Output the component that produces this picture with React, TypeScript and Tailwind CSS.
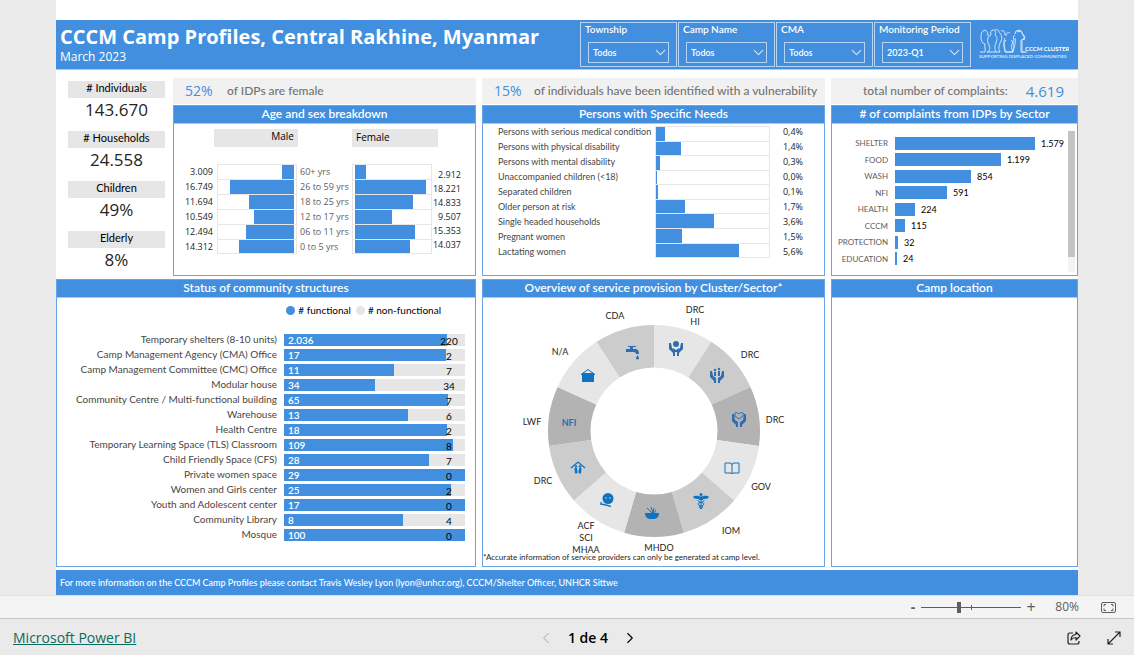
import React, { useState } from 'react';
import { ChevronDown, ChevronLeft, ChevronRight } from 'lucide-react';

const AGE_GROUPS = [
  { label: '60+ yrs', male: '3.009', maleWidth: 12, female: '2.912', femaleWidth: 11 },
  { label: '26 to 59 yrs', male: '16.749', maleWidth: 64, female: '18.221', femaleWidth: 71 },
  { label: '18 to 25 yrs', male: '11.694', maleWidth: 45, female: '14.833', femaleWidth: 58 },
  { label: '12 to 17 yrs', male: '10.549', maleWidth: 40, female: '9.507', femaleWidth: 37 },
  { label: '06 to 11 yrs', male: '12.494', maleWidth: 48, female: '15.353', femaleWidth: 60 },
  { label: '0 to 5 yrs', male: '14.312', maleWidth: 55, female: '14.037', femaleWidth: 55 },
];

const NEEDS = [
  { label: 'Persons with serious medical condition', value: '0,4%', width: 9 },
  { label: 'Persons with physical disability', value: '1,4%', width: 25 },
  { label: 'Persons with mental disability', value: '0,3%', width: 4 },
  { label: 'Unaccompanied children (<18)', value: '0,0%', width: 1 },
  { label: 'Separated children', value: '0,1%', width: 2 },
  { label: 'Older person at risk', value: '1,7%', width: 29 },
  { label: 'Single headed households', value: '3,6%', width: 58 },
  { label: 'Pregnant women', value: '1,5%', width: 26 },
  { label: 'Lactating women', value: '5,6%', width: 83 },
];

const COMPLAINTS = [
  { label: 'SHELTER', value: 1579 },
  { label: 'FOOD', value: 1199 },
  { label: 'WASH', value: 854 },
  { label: 'NFI', value: 591 },
  { label: 'HEALTH', value: 224 },
  { label: 'CCCM', value: 115 },
  { label: 'PROTECTION', value: 32 },
  { label: 'EDUCATION', value: 24 },
];

const STRUCTURES = [
  { label: 'Temporary shelters (8-10 units)', ok: '2.036', broken: '220', share: 90 },
  { label: 'Camp Management Agency (CMA) Office', ok: '17', broken: '2', share: 89.5 },
  { label: 'Camp Management Committee (CMC) Office', ok: '11', broken: '7', share: 61 },
  { label: 'Modular house', ok: '34', broken: '34', share: 50 },
  { label: 'Community Centre / Multi-functional building', ok: '65', broken: '7', share: 90.5 },
  { label: 'Warehouse', ok: '13', broken: '6', share: 68.5 },
  { label: 'Health Centre', ok: '18', broken: '2', share: 90 },
  { label: 'Temporary Learning Space (TLS) Classroom', ok: '109', broken: '8', share: 93.5 },
  { label: 'Child Friendly Space (CFS)', ok: '28', broken: '7', share: 80 },
  { label: 'Private women space', ok: '29', broken: '0', share: 100 },
  { label: 'Women and Girls center', ok: '25', broken: '2', share: 92.5 },
  { label: 'Youth and Adolescent center', ok: '17', broken: '0', share: 100 },
  { label: 'Community Library', ok: '8', broken: '4', share: 66 },
  { label: 'Mosque', ok: '100', broken: '0', share: 100 },
];

const KPIS = [
  { label: '# Individuals', value: '143.670' },
  { label: '# Households', value: '24.558' },
  { label: 'Children', value: '49%' },
  { label: 'Elderly', value: '8%' },
];

const SLICERS = [
  { id: 'township', label: 'Township', value: 'Todos' },
  { id: 'camp', label: 'Camp Name', value: 'Todos' },
  { id: 'cma', label: 'CMA', value: 'Todos' },
  { id: 'period', label: 'Monitoring Period', value: '2023-Q1' },
];

const SHADES = ['#e6e6e6', '#cccccc', '#b3b3b3'];
// Shade of each ring slice, clockwise from the top
const SLICES = [0, 1, 2, 0, 1, 2, 0, 1, 2, 0, 1];

const PROVIDERS: Array<{ x: number; y: number; lines: string[] }> = [
  { x: 41, y: -118, lines: ['DRC', 'HI'] },
  { x: 96, y: -73, lines: ['DRC'] },
  { x: 121, y: -8, lines: ['DRC'] },
  { x: 107, y: 59, lines: ['GOV'] },
  { x: 77, y: 103, lines: ['IOM'] },
  { x: 5, y: 120, lines: ['MHDO'] },
  { x: -68, y: 98, lines: ['ACF', 'SCI', 'MHAA'] },
  { x: -111, y: 53, lines: ['DRC'] },
  { x: -122, y: -6, lines: ['LWF'] },
  { x: -94, y: -76, lines: ['N/A'] },
  { x: -39, y: -112, lines: ['CDA'] },
];

function slicePath(index: number) {
  const step = (2 * Math.PI) / SLICES.length;
  const point = (r: number, i: number) => `${r * Math.sin(i * step)} ${-r * Math.cos(i * step)}`;
  return `M${point(106, index)} A106 106 0 0 1 ${point(106, index + 1)} L${point(63.5, index + 1)} A63.5 63.5 0 0 0 ${point(63.5, index)} Z`;
}

const Panel: React.FC<{ title: string; className?: string; children?: React.ReactNode }> = ({
  title,
  className = '',
  children,
}) => (
  <section className={`flex flex-col border border-[#69a5e6] bg-white ${className}`}>
    <h2 className="h-[18px] shrink-0 border-b border-[#a9ccf2] bg-[#418fde] text-center text-xs leading-4 font-semibold text-white">
      {title}
    </h2>
    {children}
  </section>
);

const Slicer: React.FC<{ id: string; label: string; value: string }> = ({ id, label, value }) => (
  <div className="h-[45px] w-[97px] border border-[#b5d5f6] px-[7px]">
    <label htmlFor={id} className="-ml-[3px] block text-[10px] leading-3 font-semibold whitespace-nowrap text-white">
      {label}
    </label>
    <div className="relative mt-[7px]">
      <select
        id={id}
        defaultValue={value}
        className="block h-[21px] w-full appearance-none border border-[#b5d5f6] bg-[#418fde] pl-1 text-[9px] font-semibold text-white"
      >
        <option>{value}</option>
      </select>
      <ChevronDown size={17} strokeWidth={1.5} className="pointer-events-none absolute top-[2px] right-0 text-[#d5e6f9]" />
    </div>
  </div>
);

const ClusterLogo = () => (
  <svg width="90" height="34" viewBox="0 0 90 34" fill="none" stroke="#d5e6f9" strokeWidth="1" aria-label="CCCM Cluster">
    <path d="M1 24h5c1-3-1-5 0-8-3-1-4-3-4-7 0-4 1-6 4-7 2 1 3 3 3 6M8 24c4-1 3-5 1-9-1-4 0-7 3-8-1-3 0-5 2-5 3 0 3 3 2 5 3 2 2 5 1 8-2 4-1 7 0 9H8zM16 2c2-1 4 0 4 2 2 2 4 5 2 9-2 4-3 8-1 11h-4M22 3c3-1 4 1 4 4M26 10c-2 4-1 8 0 14h8M34 24c-2-4-2-8 1-12-1-2-1-4 1-5M27 8c0-3 2-4 4-3M33 24c2-5 4-8 3-14M38 4l4-1 4 8-4 1v12h4" />
    <path d="M27 12c-3 3-2 8 0 12h7c2-5 1-10-2-12M36 6l1-3 4-1 5 7-3 3v12h5" />
    <text x="46" y="23" className="fill-white stroke-none text-[6px] font-bold">CCCM CLUSTER</text>
    <text x="0" y="30" fontSize="4.5" fontWeight="700" className="fill-[#d5e6f9] stroke-none">SUPPORTING DISPLACED COMMUNITIES</text>
  </svg>
);

const ServiceIcons = () => (
  <g fill="#2e6db0">
    {/* protection: figure between two hands */}
    <g transform="translate(14 -91)">
      <circle cx="8" cy="4" r="3" />
      <path d="M1 3v6l4 4v3h2v-5L4 8 3 3zM15 3v6l-4 4v3H9v-5l3-3 1-5z" />
      <path d="M5 8l3 2 3-2v1l-2 3H7L5 9z" />
    </g>
    {/* child protection */}
    <g transform="translate(55 -64)">
      <path d="M1 4v6l4 4v2h2v-5L4 9 3 4zM15 4v6l-4 4v2H9v-5l3-2 1-5z" />
      <circle cx="6" cy="3" r="1.2" />
      <circle cx="10" cy="2" r="1.2" />
      <path d="M5 5h2v4H5zM9 4h2v5H9z" />
    </g>
    {/* gender-based violence */}
    <g transform="translate(77 -20)">
      <path d="M1 3v7l4 4v2h2v-5L4 9 3 3zM15 3v7l-4 4v2H9v-5l3-2 1-6z" />
      <path d="M4 2c2-1 3 0 4 1 1-1 2-2 4-1v3L8 8 4 5z" fill="none" stroke="#2e6db0" />
    </g>
    {/* education: open book */}
    <path d="M71 32h5q2 0 2 2 0-2 2-2h5v10h-5q-2 0-2 1 0-1-2-1h-5zM78 34v9" fill="#e6e6e6" stroke="#0f73c0" strokeWidth="1" />
    {/* health: caduceus */}
    <g transform="translate(39 62)" fill="#0f73c0">
      <circle cx="8" cy="1.500" r="1.500" />
      <path d="M0 4c3-2 5-1 8 0 3-1 5-2 8 0-1 2-4 2-6 2v1H6V6C4 6 1 6 0 4zM7.500 3h1v13h-1z" />
      <path d="M5 7c0 3 6 2 6 4s-5 2-5 3 3 1 3 2M11 7c0 3-6 2-6 4s5 2 5 3-3 1-3 2" fill="none" stroke="#0f73c0" />
    </g>
    {/* food: bowl */}
    <g transform="translate(-10 75)" fill="#0f73c0">
      <path d="M1 7h14c0 4-2 5-4 6H5C3 12 1 11 1 7z" />
      <path d="M3 2l5 5M7 1l2 6M10 2l-1 5M12 4l-2 3" stroke="#0f73c0" />
    </g>
    {/* nutrition */}
    <g transform="translate(-55 62)" fill="#0f73c0">
      <circle cx="9" cy="5.500" r="5.500" />
      <path d="M2 11l5 1c2 0 3 2 5 1M2 9v3" fill="none" stroke="#0f73c0" strokeWidth="1.300" />
      <circle cx="7" cy="5" r=".7" fill="#e6e6e6" />
      <circle cx="11" cy="5" r=".7" fill="#e6e6e6" />
    </g>
    {/* camp coordination: people under a roof */}
    <g transform="translate(-83 30)" fill="#0f73c0">
      <path d="M0 7l7-6 7 6" fill="none" stroke="#0f73c0" strokeWidth="1.300" />
      <circle cx="5" cy="5.500" r="1.200" />
      <circle cx="9" cy="5.500" r="1.200" />
      <path d="M3.500 7h2.500v5.500H4zM8 7h2.500l-.5 5.500H8zM6.600 9h.8v3h-.8z" />
    </g>
    <text x="-85" y="-5" textAnchor="middle" className="text-[9px] font-bold">NFI</text>
    {/* shelter */}
    <g transform="translate(-73 -62)" fill="#0f73c0">
      <path d="M0 5l7-5 7 5v1h-1v7H1V6H0zM3 4h8L7 1z" fillRule="evenodd" />
    </g>
    {/* water: tap */}
    <g transform="translate(-29 -86)">
      <path d="M3 1h8v1H8v2h2c3 0 4 2 4 5h-3c0-1-1-2-2-2H1V4h4V2H3z" />
      <path d="M12.500 10c1 2 1.500 2 1.500 3a1.500 1.500 0 0 1-3 0c0-1 .5-1 1.500-3z" />
    </g>
  </g>
);

const ServiceRing = () => (
  <svg viewBox="-171 -133 342 268" className="mx-auto h-[268px] w-[342px] overflow-visible" role="img" aria-label="Service providers by sector">
    {SLICES.map((shade, index) => (
      <path key={index} d={slicePath(index)} fill={SHADES[shade]} />
    ))}
    <ServiceIcons />
    {PROVIDERS.map((p) => (
      <text key={`${p.x}-${p.y}`} y={p.y} textAnchor="middle" className="fill-[#252423] text-[9px]">
        {p.lines.map((line, i) => (
          <tspan key={line} x={p.x} dy={i ? 12 : 0}>{line}</tspan>
        ))}
      </text>
    ))}
  </svg>
);

const AgeChart = () => (
  <div className="grid flex-1 grid-cols-[39px_84px_55px_80px_1fr] content-start gap-y-[17px] pt-[5px] font-['Open_Sans','Noto_Sans',sans-serif] text-[9px]">
    <div className="col-span-2 ml-10 h-[18px] w-[84px] bg-[#e6e6e6] pr-1 text-right text-[10px] leading-[15px] text-black">Male</div>
    <div />
    <div className="col-span-2 h-[18px] w-[86px] bg-[#e6e6e6] pl-1 text-[10px] leading-4 text-black">Female</div>
    <ul className="text-right leading-[15px]">
      {AGE_GROUPS.map((g) => <li key={g.label}>{g.male}</li>)}
    </ul>
    <ul className="ml-1">
      {AGE_GROUPS.map((g) => (
        <li key={g.label} className="flex h-[15px] justify-end border border-b-0 border-[#e6e6e6] pr-[2px] last:border-b">
          <div className="bg-[#418fde]" style={{ width: g.maleWidth }} />
        </li>
      ))}
    </ul>
    <ul className="pl-[3px] leading-[15px] whitespace-nowrap text-[#605e5c]">
      {AGE_GROUPS.map((g) => <li key={g.label}>{g.label}</li>)}
    </ul>
    <ul>
      {AGE_GROUPS.map((g) => (
        <li key={g.label} className="flex h-[15px] border border-b-0 border-[#e6e6e6] pl-[2px] last:border-b">
          <div className="bg-[#418fde]" style={{ width: g.femaleWidth }} />
        </li>
      ))}
    </ul>
    <ul className="w-[29px] pt-1 text-right leading-[14px]">
      {AGE_GROUPS.map((g) => <li key={g.label}>{g.female}</li>)}
    </ul>
  </div>
);

const NeedsChart = () => (
  <div className="flex items-start pl-[15px] text-[9px] leading-[15px]">
    <ul className="w-[157px] whitespace-nowrap text-[#484644]">
      {NEEDS.map((n) => <li key={n.label}>{n.label}</li>)}
    </ul>
    <ul className="mt-[2px] flex h-[132px] w-[115px] flex-col">
      {NEEDS.map((n) => (
        <li key={n.label} className="flex flex-1 border border-b-0 border-[#e6e6e6] last:border-b">
          <div className="bg-[#418fde]" style={{ width: n.width }} />
        </li>
      ))}
    </ul>
    <ul className="w-[33px] text-right font-['Open_Sans','Noto_Sans',sans-serif]">
      {NEEDS.map((n) => <li key={n.label}>{n.value}</li>)}
    </ul>
  </div>
);

const ComplaintsChart = () => (
  <div className="flex flex-1 justify-between pt-[7px] pr-[2px] pb-[3px]">
    <ul className="mt-1 flex h-[132px] flex-1 flex-col text-[9px]">
      {COMPLAINTS.map((c) => (
        <li key={c.label} className="flex flex-1 items-center">
          <span className="w-14 text-right text-[8px] text-[#605e5c]">{c.label}</span>
          <div className="mr-[6px] ml-[7px] h-[13px] bg-[#418fde]" style={{ width: Math.round(c.value * 0.0887) }} />
          <span className="text-black">{c.value.toLocaleString('de-DE')}</span>
        </li>
      ))}
    </ul>
    <div className="w-[7px] bg-[#f3f3f3]">
      <div className="h-[126px] bg-[#c3c3c3]" />
    </div>
  </div>
);

const StructuresChart = () => (
  <div className="pt-[5px]">
    <div className="flex items-center justify-end gap-[3px] pr-[34px] text-[10px] leading-[15px] text-black">
      <span className="size-[9px] rounded-full bg-[#418fde]" /># functional
      <span className="ml-[2px] size-[9px] rounded-full bg-[#e6e6e6]" /># non-functional
    </div>
    <ul className="mt-[14px] pr-[10px]">
      {STRUCTURES.map((s) => (
        <li key={s.label} className="flex h-[15px] items-center">
          <span className="w-[220px] text-right text-[10px] leading-[15px] whitespace-nowrap text-[#484644]">{s.label}</span>
          <div className="relative ml-[7px] h-3 flex-1 bg-[#e6e6e6]">
            <div className="h-3 bg-[#418fde]" style={{ width: `${s.share}%` }} />
            <span className="absolute top-0 left-1 text-[10px] leading-3 font-semibold text-white">{s.ok}</span>
            <span className="absolute top-0 right-1 w-6 text-center text-[10px] leading-[14px] text-black">{s.broken}</span>
          </div>
        </li>
      ))}
    </ul>
  </div>
);

export default function App() {
  const [zoom, setZoom] = useState(80);

  return (
    <div className="flex min-h-screen flex-col bg-[#eaeaea] font-[Lato,'Open_Sans',sans-serif] text-[#252423]">
      <main className="mx-14 flex-1 bg-white pt-5">
        <header className="flex h-[50px] justify-between border-b border-[#a9ccf2] bg-[#418fde] pr-[9px] pl-1 text-white">
          <div className="font-['Open_Sans','Noto_Sans',sans-serif]">
            <h1 className="pt-[3px] text-[20px] leading-7 font-bold whitespace-nowrap">CCCM Camp Profiles, Central Rakhine, Myanmar</h1>
            <p className="text-xs leading-3 font-medium">March 2023</p>
          </div>
          <div className="flex gap-px pt-[2px]">
            {SLICERS.map((s) => <Slicer key={s.id} {...s} />)}
            <div className="pt-[6px] pl-[7px]"><ClusterLogo /></div>
          </div>
        </header>

        <div className="grid grid-cols-[minmax(0,420fr)_minmax(0,343fr)_minmax(0,247fr)] gap-x-[6px] pt-2">
          <div className="flex">
            <dl className="flex w-[117px] flex-col pt-[3px] pr-2 pl-3 text-center">
              {KPIS.map((k) => (
                <div key={k.label} className="h-[50px] last:h-10">
                  <dt className="h-[17px] bg-[#e6e6e6] text-[11px] leading-[13px] text-black">{k.label}</dt>
                  <dd className="font-['Open_Sans','Noto_Sans',sans-serif] text-[17px] leading-[23px]">{k.value}</dd>
                </div>
              ))}
            </dl>
            <div className="flex min-w-0 flex-1 flex-col">
              <p className="flex h-[26px] items-center bg-[#f1f1f1] text-xs leading-4 font-medium text-[#737373]">
                <span className="w-[54px] pl-3 font-['Open_Sans','Noto_Sans',sans-serif] text-sm font-normal text-[#418fde]">52%</span>
                of IDPs are female
              </p>
              <Panel title="Age and sex breakdown" className="mt-px h-[171px]">
                <AgeChart />
              </Panel>
            </div>
          </div>
          <div>
            <p className="flex h-[26px] items-center bg-[#f1f1f1] text-xs leading-4 font-medium whitespace-nowrap text-[#737373]">
              <span className="w-[52px] pl-3 font-['Open_Sans','Noto_Sans',sans-serif] text-sm font-normal text-[#418fde]">15%</span>
              of individuals have been identified with a vulnerability
            </p>
            <Panel title="Persons with Specific Needs" className="mt-px h-[171px]">
              <NeedsChart />
            </Panel>
          </div>
          <div>
            <p className="flex h-[26px] items-center justify-end gap-[18px] bg-[#f1f1f1] pr-[14px] text-xs leading-4 font-medium whitespace-nowrap text-[#737373]">
              total number of complaints:
              <span className="font-['Open_Sans','Noto_Sans',sans-serif] text-[15px] font-normal text-[#418fde]">4.619</span>
            </p>
            <Panel title="# of complaints from IDPs by Sector" className="mt-px h-[171px]">
              <ComplaintsChart />
            </Panel>
          </div>
        </div>

        <div className="mt-[3px] grid h-[288px] grid-cols-[minmax(0,420fr)_minmax(0,343fr)_minmax(0,247fr)] gap-x-[6px]">
          <Panel title="Status of community structures">
            <StructuresChart />
          </Panel>
          <Panel title="Overview of service provision by Cluster/Sector*" className="relative">
            <ServiceRing />
            <p className="absolute bottom-[3px] left-0 text-[8px] leading-3 whitespace-nowrap">
              *Accurate information of service providers can only be generated at camp level.
            </p>
          </Panel>
          <Panel title="Camp location" />
        </div>

        <footer className="mt-[3px] flex h-[25px] items-center bg-[#418fde] pl-1 text-[9px] font-medium text-white">
          For more information on the CCCM Camp Profiles please contact Travis Wesley Lyon (lyon@unhcr.org), CCCM/Shelter Officer, UNHCR Sittwe
        </footer>
      </main>

      <div className="flex h-6 items-center justify-end border-t border-b border-t-[#e0e0e0] border-b-[#c8c8c8] bg-[#f4f4f4] pr-[18px] font-['Open_Sans','Noto_Sans',sans-serif] text-[#605e5c]">
        <button type="button" aria-label="Zoom out" className="w-3 text-center text-sm leading-4 font-bold" onClick={() => setZoom(Math.max(10, zoom - 10))}>-</button>
        <div className="relative mx-[2px] flex h-3 w-[100px] items-center">
          <div className="absolute inset-x-0 top-[6px] h-px bg-[#605e5c]" />
          <div className="absolute top-1 left-1/2 h-[5px] w-px bg-[#605e5c]" />
          <input
            type="range"
            aria-label="Zoom"
            min={10}
            max={195}
            value={zoom}
            onChange={(e) => setZoom(parseInt(e.target.value))}
            className="relative h-3 w-full appearance-none bg-transparent [&::-webkit-slider-thumb]:h-[11px] [&::-webkit-slider-thumb]:w-1 [&::-webkit-slider-thumb]:appearance-none [&::-webkit-slider-thumb]:bg-[#605e5c]"
          />
        </div>
        <button type="button" aria-label="Zoom in" className="w-4 text-center text-base leading-4" onClick={() => setZoom(Math.min(195, zoom + 10))}>+</button>
        <span className="w-10 text-right text-xs">{zoom}%</span>
        <button type="button" aria-label="Fit to page" className="ml-[22px]">
          <svg width="15" height="11" viewBox="0 0 15 11" fill="none" stroke="currentColor">
            <rect x=".5" y=".5" width="14" height="10" rx="1.500" />
            <path d="M5 2.500H3v2M10 2.500h2v2M5 8.500H3v-2M10 8.500h2v-2" />
          </svg>
        </button>
      </div>

      <div className="grid h-9 grid-cols-[1fr_auto_1fr] items-center px-[13px] pt-px font-['Open_Sans','Noto_Sans',sans-serif]">
        <a href="https://powerbi.microsoft.com" className="text-sm text-[#0b6a5d] underline">Microsoft Power BI</a>
        <nav className="flex items-center gap-[13px] pl-[42px] text-sm font-semibold text-black">
          <button type="button" aria-label="Previous page" disabled className="text-[#c0c0c0]"><ChevronLeft size={18} strokeWidth={1.5} /></button>
          <span>1 de 4</span>
          <button type="button" aria-label="Next page"><ChevronRight size={18} strokeWidth={1.5} /></button>
        </nav>
        <div className="flex justify-end gap-[26px] text-[#252423]">
          <button type="button" aria-label="Share">
            <svg width="14" height="14" viewBox="0 0 14 14" fill="none" stroke="currentColor" strokeWidth="1.200" strokeLinejoin="round">
              <path d="M6 2H3Q1 2 1 4v7q0 2 2 2h7q2 0 2-2v-1" />
              <path d="M9 1l4 4-4 4V6.500Q6 6.500 4 9q0-5 5-5.500z" />
            </svg>
          </button>
          <button type="button" aria-label="Full screen">
            <svg width="14" height="14" viewBox="0 0 14 14" fill="none" stroke="currentColor" strokeWidth="1.200">
              <path d="M1.500 12.500l11-11M8 1h5v5M1 8v5h5" />
            </svg>
          </button>
        </div>
      </div>
    </div>
  );
}
